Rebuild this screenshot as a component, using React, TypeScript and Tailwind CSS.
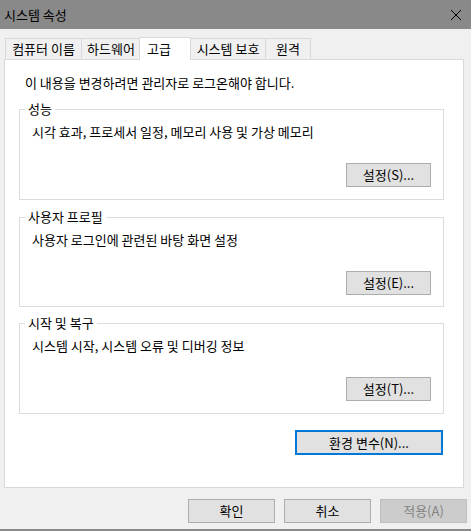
import React from 'react'

const font = { fontFamily: '"Noto Sans CJK KR", "Noto Sans", sans-serif' }

interface GroupProps {
  label: string
  text: string
  button: string
  className?: string
}

function Group({ label, text, button, className = '' }: GroupProps) {
  return (
    <div className={`relative border border-[#dcdcdc] flex flex-col ${className}`}>
      <span className="absolute -top-[10px] left-[5px] bg-white px-[3px] text-[13px] leading-[18px]">
        {label}
      </span>
      <p className="pl-[12px] pt-[13px] text-[13px] leading-[18px]">{text}</p>
      <button className="ml-auto mr-[12px] mt-[22px] w-[85px] h-[24px] border border-[#adadad] bg-[#e1e1e1] text-[13px] leading-[18px]">
        {button}
      </button>
    </div>
  )
}

export default function App() {
  const tabs = [
    { name: '컴퓨터 이름', w: 'w-[77px]', ml: 'ml-[5px]' },
    { name: '하드웨어', w: 'w-[60px]', ml: '-ml-px' },
    { name: '고급', w: 'w-[52px]', ml: '-ml-[2px]', active: true },
    { name: '시스템 보호', w: 'w-[76px]', ml: '-ml-px' },
    { name: '원격', w: 'w-[46px]', ml: '-ml-px' },
  ]

  return (
    <div className="w-[471px] h-[531px] bg-[#f0f0f0] flex flex-col text-black border-b-2 border-[#8a8a8a]" style={font}>
      {/* title bar */}
      <div className="h-[29px] bg-[#898989] flex items-center justify-between pl-[4px] pr-[8px] shrink-0">
        <span className="text-[13px] leading-[18px]">시스템 속성</span>
        <svg width="12" height="12" viewBox="0 0 12 12" className="mr-[1px]">
          <path d="M1 1 L11 11 M11 1 L1 11" stroke="#000" strokeWidth="1" fill="none" />
        </svg>
      </div>

      {/* tabs */}
      <div className="flex items-end h-[23px] mt-[8px] shrink-0">
        {tabs.map((t) =>
          t.active ? (
            <div
              key={t.name}
              className={`${t.w} ${t.ml} relative z-10 h-[23px] bg-white border border-b-0 border-[#d9d9d9] flex items-center pl-[7px] text-[13px] leading-[18px]`}
            >
              {t.name}
            </div>
          ) : (
            <div
              key={t.name}
              className={`${t.w} ${t.ml} h-[21px] mb-px bg-[#f0f0f0] border border-b-0 border-[#d9d9d9] flex items-center justify-center text-[13px] leading-[18px]`}
            >
              {t.name}
            </div>
          )
        )}
      </div>

      {/* panel */}
      <div className="-mt-px ml-[4px] w-[460px] h-[429px] bg-white border border-[#d9d9d9] flex flex-col pl-[14px] pr-[19px] shrink-0">
        <p className="pt-[14px] pl-[6px] text-[13px] leading-[18px]">이 내용을 변경하려면 관리자로 로그온해야 합니다.</p>
        <Group
          className="mt-[17px] h-[91px]"
          label="성능"
          text="시각 효과, 프로세서 일정, 메모리 사용 및 가상 메모리"
          button="설정(S)..."
        />
        <Group
          className="mt-[17px] h-[90px]"
          label="사용자 프로필"
          text="사용자 로그인에 관련된 바탕 화면 설정"
          button="설정(E)..."
        />
        <Group
          className="mt-[16px] h-[91px]"
          label="시작 및 복구"
          text="시스템 시작, 시스템 오류 및 디버깅 정보"
          button="설정(T)..."
        />
        <button className="mt-[16px] ml-auto mr-[1px] w-[148px] h-[25px] border-2 border-[#0078d7] bg-[#e1e1e1] text-[13px] leading-[18px]">
          환경 변수(N)...
        </button>
      </div>

      {/* bottom buttons */}
      <div className="flex justify-end gap-[9px] pr-[4px] mt-[11px]">
        <button className="w-[87px] h-[24px] border border-[#adadad] bg-[#e1e1e1] text-[13px] leading-[18px]">확인</button>
        <button className="w-[87px] h-[24px] border border-[#adadad] bg-[#e1e1e1] text-[13px] leading-[18px]">취소</button>
        <button className="w-[87px] h-[24px] border border-[#bfbfbf] bg-[#cccccc] text-[#838383] text-[13px] leading-[18px]">적용(A)</button>
      </div>
    </div>
  )
}
